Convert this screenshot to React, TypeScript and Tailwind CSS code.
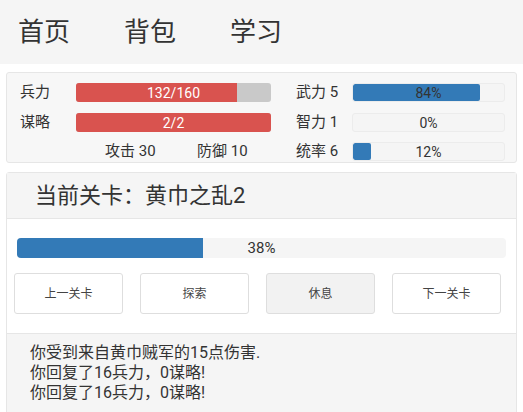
import React from "react";

const font = { fontFamily: 'Roboto, "Noto Sans CJK SC", sans-serif' };

function RedBar({ value, max }: { value: number; max: number }) {
  const pct = (value / max) * 100;
  return (
    <div className="relative h-[19px] w-[195px] rounded-[3px] bg-[#c9c9c9] overflow-hidden">
      <div className="absolute left-0 top-0 h-full bg-[#d9534f]" style={{ width: `${pct}%` }} />
      <div className="absolute inset-0 flex items-center justify-center text-[14px] text-white leading-none">
        {value}/{max}
      </div>
    </div>
  );
}

function BlueBar({ pct }: { pct: number }) {
  return (
    <div className="relative h-[19px] w-[153px] rounded-[3px] bg-[#f5f5f5] border border-[#ececec] overflow-hidden">
      <div className="absolute left-0 top-0 h-full bg-[#337ab7] rounded-[2px]" style={{ width: `${pct}%` }} />
      <div className="absolute inset-0 flex items-center justify-center text-[14px] text-[#333] leading-none">
        {pct}%
      </div>
    </div>
  );
}

export default function App() {
  return (
    <div className="w-[523px] h-[412px] bg-white overflow-hidden text-[#333]" style={font}>
      <div className="h-[64px] bg-[#f5f5f5] flex items-center pl-[18px] gap-[54px] text-[26px] text-[#333]">
        <span>首页</span>
        <span>背包</span>
        <span>学习</span>
      </div>

      <div className="mx-[6px] mt-[8px] h-[91px] rounded-[3px] border border-[#e6e6e6] bg-[#f7f7f7] flex pl-[13px] pt-[10px] text-[15px]">
        <div className="flex flex-col gap-[11px]">
          <div className="flex items-center h-[19px]">
            <span className="w-[56px]">兵力</span>
            <RedBar value={132} max={160} />
          </div>
          <div className="flex items-center h-[19px]">
            <span className="w-[56px]">谋略</span>
            <RedBar value={2} max={2} />
          </div>
          <div className="flex items-center h-[19px] -mt-[1px]">
            <span className="ml-[85px] w-[92px]">攻击 30</span>
            <span>防御 10</span>
          </div>
        </div>
        <div className="flex flex-col gap-[11px] ml-[25px]">
          <div className="flex items-center h-[19px]">
            <span className="w-[56px]">武力 5</span>
            <BlueBar pct={84} />
          </div>
          <div className="flex items-center h-[19px]">
            <span className="w-[56px]">智力 1</span>
            <BlueBar pct={0} />
          </div>
          <div className="flex items-center h-[19px] -mt-[1px]">
            <span className="w-[56px]">统率 6</span>
            <BlueBar pct={12} />
          </div>
        </div>
      </div>

      <div className="mx-[6px] mt-[9px] border border-[#e6e6e6] rounded-t-[3px]">
        <div className="h-[46px] bg-[#f5f5f5] border-b border-[#e6e6e6] flex items-center pl-[28px] text-[22px] text-[#333]">
          当前关卡：黄巾之乱2
        </div>
        <div className="bg-white pt-[19px] pb-[19px]">
          <div className="mx-[10px] relative h-[20px] rounded-[4px] bg-[#f5f5f5] overflow-hidden">
            <div className="absolute left-0 top-0 h-full bg-[#337ab7]" style={{ width: "38%" }} />
            <div className="absolute inset-0 flex items-center justify-center text-[15px] text-[#333] leading-none">
              38%
            </div>
          </div>
          <div className="flex gap-[17px] pl-[7px] mt-[15px]">
            {["上一关卡", "探索", "休息", "下一关卡"].map((t) => (
              <div
                key={t}
                className={`w-[109px] h-[41px] rounded-[3px] border border-[#dedede] flex items-center justify-center text-[12px] text-[#444] ${
                  t === "休息" ? "bg-[#f2f2f2]" : "bg-white"
                }`}
              >
                {t}
              </div>
            ))}
          </div>
        </div>
        <div className="bg-[#f5f5f5] border-t border-[#e6e6e6] h-[80px] pl-[23px] pt-[9px] text-[16px] leading-[20px] text-[#333]">
          <div>你受到来自黄巾贼军的15点伤害.</div>
          <div>你回复了16兵力，0谋略!</div>
          <div>你回复了16兵力，0谋略!</div>
        </div>
      </div>
    </div>
  );
}
